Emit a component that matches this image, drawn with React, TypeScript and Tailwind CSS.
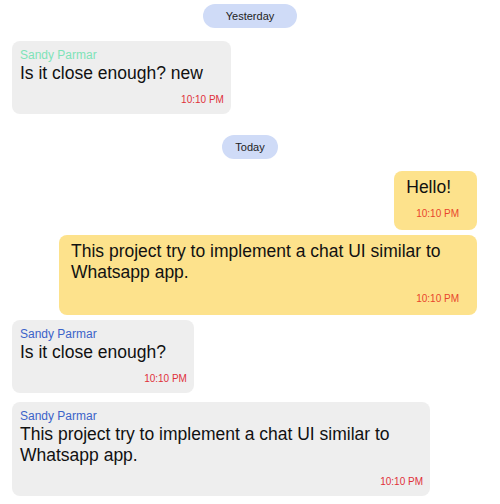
type In = { name: string; nameColor: string; text: string; time: string };

const DatePill = ({ text, wide }: { text: string; wide?: boolean }) => (
  <div className="flex justify-center">
    <span
      className={`rounded-full bg-[#cfdbf7] h-6 flex items-center text-[11px] text-[#222] ${
        wide ? "px-[23px]" : "px-[13px]"
      }`}
    >
      {text}
    </span>
  </div>
);

const Incoming = ({ name, nameColor, text, time }: In) => (
  <div className="flex justify-start">
    <div className="max-w-[418px] rounded-lg bg-[#eeeeee] pl-2 pr-[7px] pt-[6px] pb-[7px]">
      <div className={`text-[12px] leading-[16px] ${nameColor}`}>{name}</div>
      <div className="text-[17.5px] leading-[21px] text-[#111] pr-[21px]">{text}</div>
      <div className="mt-[9px] text-right text-[10px] leading-[14px] text-[#e0303a]">{time}</div>
    </div>
  </div>
);

const Outgoing = ({ text, time }: { text: string; time: string }) => (
  <div className="flex justify-end mr-[11px]">
    <div className="max-w-[418px] rounded-lg bg-[#fde28c] pl-3 pr-[18px] pt-[6px] pb-[9px]">
      <div className="text-[17.5px] leading-[21px] text-[#111] pr-[8px]">{text}</div>
      <div className="mt-[9px] text-right text-[10px] leading-[14px] text-[#e8452c]">{time}</div>
    </div>
  </div>
);

export default function App() {
  return (
    <div
      className="w-[500px] h-[504px] bg-white overflow-hidden px-3 pt-1"
      style={{ fontFamily: '"Liberation Sans", Arial, sans-serif' }}
    >
      <div className="flex flex-col">
        <DatePill text="Yesterday" wide />
        <div className="mt-[13px]">
          <Incoming name="Sandy Parmar" nameColor="text-[#7fe3b8]" text="Is it close enough? new" time="10:10 PM" />
        </div>
        <div className="mt-[21px]">
          <DatePill text="Today" />
        </div>
        <div className="mt-3">
          <Outgoing text="Hello!" time="10:10 PM" />
        </div>
        <div className="mt-[5px]">
          <Outgoing text="This project try to implement a chat UI similar to Whatsapp app." time="10:10 PM" />
        </div>
        <div className="mt-[5px]">
          <Incoming name="Sandy Parmar" nameColor="text-[#3b63c9]" text="Is it close enough?" time="10:10 PM" />
        </div>
        <div className="mt-[9px]">
          <Incoming
            name="Sandy Parmar"
            nameColor="text-[#3b63c9]"
            text="This project try to implement a chat UI similar to Whatsapp app."
            time="10:10 PM"
          />
        </div>
      </div>
    </div>
  );
}
